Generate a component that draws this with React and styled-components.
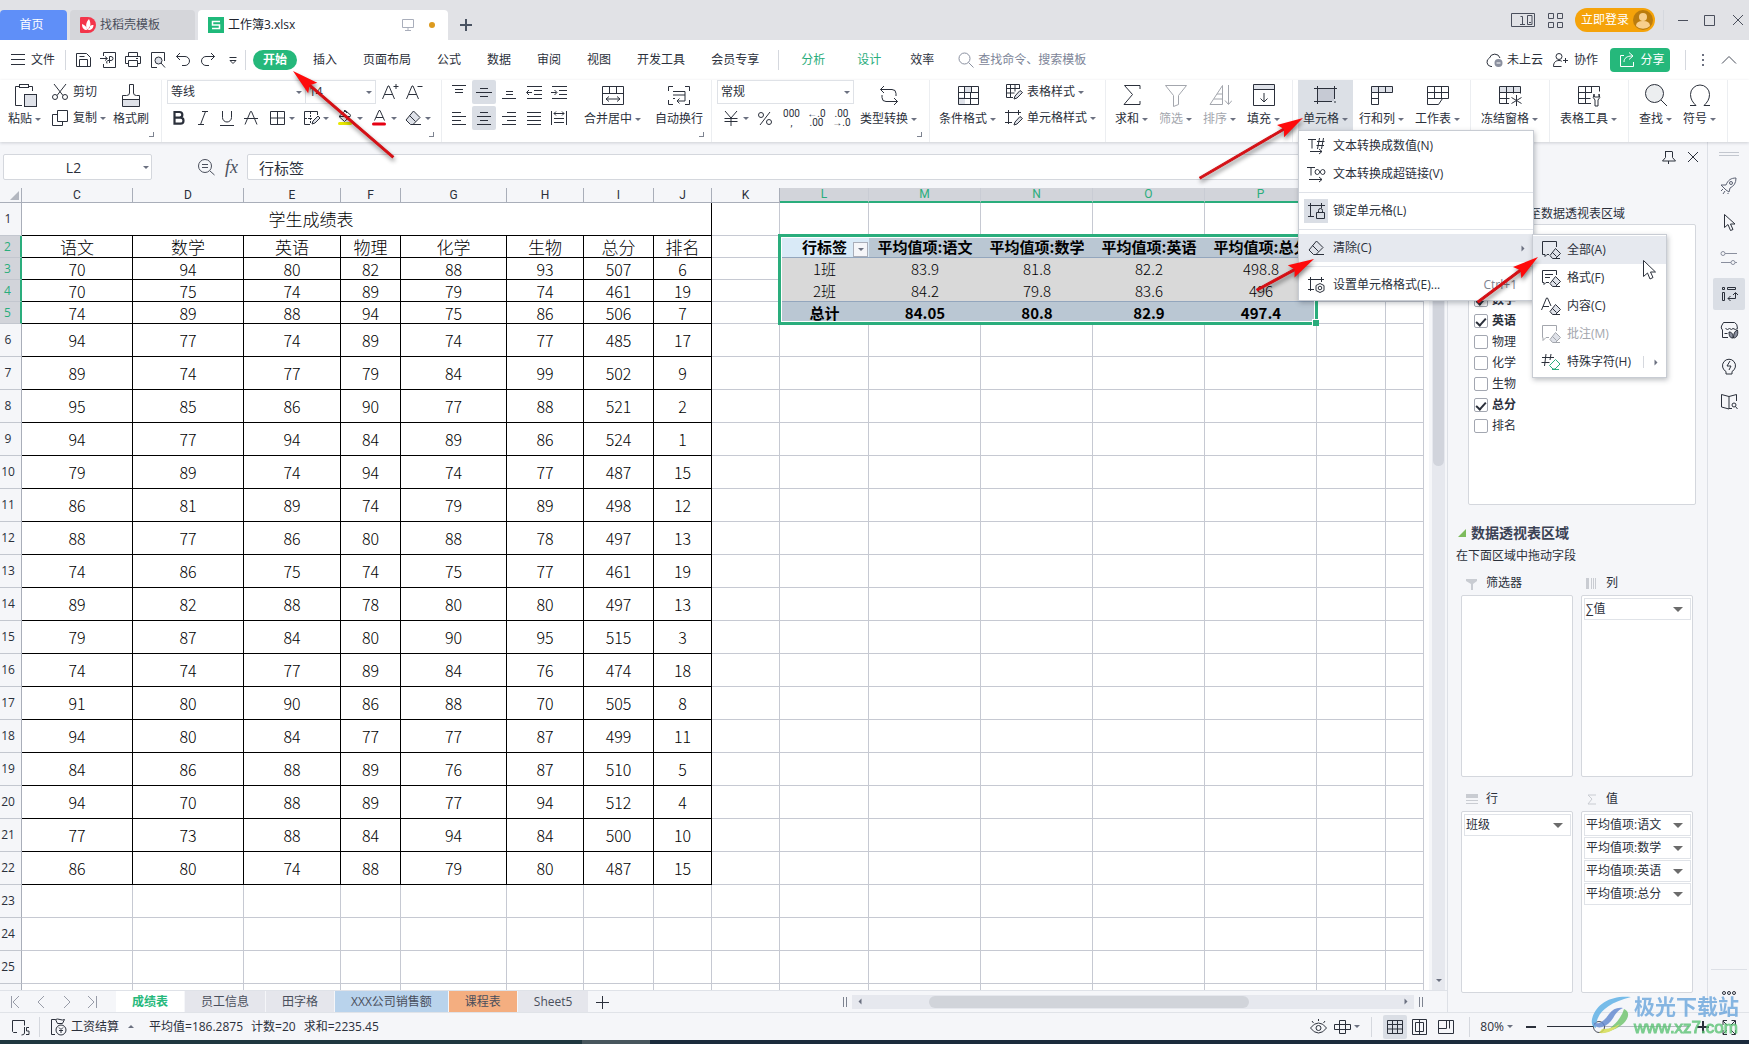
import React from "react";
import styled, { createGlobalStyle, css } from "styled-components";

const GlobalStyle = createGlobalStyle`
  * {
    box-sizing: border-box;
  }
  body {
    margin: 0;
    overflow: hidden;
    font-family: "Open Sans", "Noto Sans CJK SC", sans-serif;
    font-size: 12px;
    line-height: 16px;
    color: #2b303b;
    background: #f5f6f9;
  }
  button, input, select {
    font: inherit;
    color: inherit;
  }
  button {
    padding: 0;
    border: 0;
    background: none;
    white-space: nowrap;
  }
  a {
    color: inherit;
    text-decoration: none;
  }
`;

const GREEN = "#2aad7c";

/* ---------- icons ---------- */

const Svg = styled.svg`
  display: block;
  flex: none;
  fill: none;
  stroke: ${props => props.$color || "#2b303b"};
  stroke-width: 1;
`;

function Icon({ name, w = 24, h = 24, color }) {
  return (
    <Svg width={w} height={h} viewBox={`0 0 ${w} ${h}`} $color={color} aria-hidden="true">
      {shapes[name]}
    </Svg>
  );
}

const eraser = (
  <g>
    <path d="M12.500 5l6.500 6.500-7 7h-2.500l-4.500-4.500z" fill="#dfe2e9" />
    <path d="M8.500 9.500l6 6M12 18.500h8" fill="none" />
  </g>
);
const smallEraser = (
  <path d="M17.500 10.500l5 5-5 5h-3l-2.500-3zM14 14l4.500 4.500M15 20.500h7" fill="#dfe2e9" />
);

const shapes = {
  menu: <path d="M5 6.500h14M5 11.500h14M5 16.500h14" />,
  save: <path d="M5.500 5.500v13h14V9.500l-4-4zM8.500 18v-6.500h8V18M8.500 8.500h5" />,
  exportPdf: <path d="M7.500 8V4.500h12v15h-12V16M4 10.500h7M9 8.500l2.500 2L9 12.500M13.500 15V8.500h1.500a2 2 0 010 4h-3a2 2 0 00-1 3" />,
  print: <path d="M7.500 8.500v-4h9v4M7.500 15.500h-3v-7h15v7h-3M7.500 12.500h9v6h-9zM15 10.500h2" />,
  preview: (
    <g>
      <path d="M11 19.500H5.500v-15h13V13" />
      <circle cx="12.500" cy="12.500" r="3.500" fill="#dfe2e9" />
      <path d="M15 15l4 4.500" />
    </g>
  ),
  undo: <path d="M9 5L5.500 8.500 9 12M5.500 8.500H14a4.500 4.500 0 010 9h-3" />,
  redo: <path d="M15 5l3.500 3.500L15 12M18.500 8.500H10a4.500 4.500 0 000 9h3" />,
  more: <path d="M8.500 9.500h7M9 12.500h6l-3 3z" />,
  paste: (
    <g>
      <path d="M9 22.500H2.500V3.500h4M15.500 3.500h4V8" />
      <rect x="6.500" y="1.500" width="9" height="3" />
      <rect x="11.500" y="11.500" width="12" height="12" fill="#dfe2e9" />
    </g>
  ),
  cut: (
    <g>
      <path d="M6 4l9 11.500M18 4L9 15.500" />
      <circle cx="7" cy="17" r="2.500" />
      <circle cx="17" cy="17" r="2.500" />
    </g>
  ),
  copy: <path d="M9.500 4.500h10v11h-10zM9 8.500H4.500v11h10V16" />,
  brush: (
    <g>
      <path d="M4 17h17v6.500H4z" fill="#dfe2e9" stroke="none" />
      <path d="M10.500 10V1.500h4V10q0 2.500 3 2.500h3v11h-17v-11h4q3 0 3-2.500zM4 16.500h16" />
    </g>
  ),
  fontUp: <path d="M4.500 19L10 6h1l5.500 13M6.500 14.500h8M18 4v5M15.500 6.500h5" />,
  fontDown: <path d="M4.500 19L10 6h1l5.500 13M6.500 14.500h8M15.500 6.500h5" />,
  bold: <path d="M7.500 6h5a2.800 2.800 0 010 5.700h-5zM7.500 11.700h6a3 3 0 010 6h-6z" strokeWidth="2.200" />,
  italic: <path d="M11 5.500h6M7 18.500h6M14.500 5.500l-5 13" />,
  underline: <path d="M7.500 5v6.500a4.500 4.500 0 009 0V5M5 19.500h14" />,
  strike: <path d="M6 18.500L11.500 5.500h1l5.500 13M5 12.500h14" />,
  border: <path d="M5.500 5.500h14v13h-14zM12.500 5.500v13M5.500 12h14" />,
  drawBorder: (
    <g>
      <path d="M11 18.500H5.500v-13h13V9" />
      <path d="M11.500 6v12M6 12.500h7" strokeDasharray="2 1" />
      <path d="M13 18l1-3 5-5 2 2-5 5z" fill="#dfe2e9" />
    </g>
  ),
  bucket: (
    <g>
      <path d="M12.500 4.500l5.500 5-6.500 6-5.500-5zM6 10.500h11M11 4l3 3" />
      <rect x="5" y="16" width="14" height="3" rx="1.500" fill="#e8e800" stroke="none" />
    </g>
  ),
  fontColor: (
    <g>
      <path d="M7.500 14.500l4.500-10h1l4.500 10M9 11.500h7" />
      <rect x="5" y="16.500" width="14" height="3" rx="1.500" fill="#e60012" stroke="none" />
    </g>
  ),
  eraser,
  alignTop: <path d="M5 5.500h14M8 9.500h8M8 12.500h8" />,
  alignMiddle: <path d="M8 8.500h8M4 12.500h16M8 16.500h8" />,
  alignBottom: <path d="M9 11.500h7M9 14.500h7M5 18.500h14" />,
  outdent: <path d="M5 6.500h15M12 10.500h8M12 14.500h8M5 18.500h15M10 12.500H5M7 10l-2.500 2.500L7 15" />,
  indent: <path d="M5 6.500h15M12 10.500h8M12 14.500h8M5 18.500h15M4 12.500h5.500M7.500 10l2.500 2.500L7.500 15" />,
  alignLeft: <path d="M5 6.500h9M5 10.500h14M5 14.500h9M5 18.500h14" />,
  alignCenter: <path d="M8 6.500h8M5 10.500h14M8 14.500h8M5 18.500h14" />,
  alignRight: <path d="M10 6.500h9M5 10.500h14M10 14.500h9M5 18.500h14" />,
  justify: <path d="M5 6.500h14M5 10.500h14M5 14.500h14M5 18.500h14" />,
  distribute: <path d="M4.500 5v14M19.500 5v14M7 7.500h10M9 5.500l-2 2 2 2M15 5.500l2 2-2 2M7 12.500h10M7 16.500h10" />,
  merge: <path d="M1.500 3.500h21v18h-21zM1.500 10.500h21M8.500 3.500v7M15.500 3.500v7M5 16h14M8 13.500L5 16l3 2.500M16 13.500l3 2.500-3 2.500" />,
  wrap: <path d="M1.500 8V3.500H6M18 3.500h4.500V8M1.500 17v4.500H6M22.500 17v4.500H18M6 8.500h12M6 12h12M6 15.500h2M18 8.500V18h-8M12.500 15.500L10 18l2.500 2.500" />,
  yen: <path d="M6 5l6 7 6-7M12 12v8M5.500 12.500h13M5.500 15.500h13" />,
  percent: (
    <g>
      <circle cx="8" cy="9" r="2.500" />
      <circle cx="16" cy="16" r="2.500" />
      <path d="M17 6L7 19" />
    </g>
  ),
  convert: <path d="M7 3L3.500 6.500 7 10M3.500 6.500H15q4 0 4 4V13M17 15l3.500 3.500L17 22M20.500 18.500H9q-4 0-4-4V12" />,
  condFormat: (
    <g>
      <path d="M8 4h7v5H8zM3 14h6v7H3z" fill="#dfe2e9" stroke="none" />
      <path d="M2.500 3.500h20v18h-20zM2.500 9.500h20M2.500 15.500h20M8.500 3.500v12M14.500 9.500v12M15.500 3.500v6" />
    </g>
  ),
  tableStyle: (
    <g>
      <path d="M11 17.500H4.500v-13h13V9M4.500 8.500h13M4.500 13h8M8.500 4.500v13M13 4.500v7" />
      <path d="M12 19l1-3 5-5.500 2.500 2-5.500 5.500z" fill="#dfe2e9" />
    </g>
  ),
  cellStyle: (
    <g>
      <path d="M3 6.500h16M6.500 4v14M16.500 4v5M3 16.500h7" />
      <path d="M12 19l1-3 5-5.500 2.500 2-5.500 5.500z" fill="#dfe2e9" />
    </g>
  ),
  sum: <path d="M20 6V2.500H4.500l8 9-8.500 10h16V18" />,
  filter: <path d="M1.500 2.500h21l-8 10v9l-5 2v-11z" />,
  sort: <path d="M2 21.500h12.500v-19zM6 16h8M9 11h5M20.500 2v19M17 17.500l3.500 4 3.500-4" />,
  fill: (
    <g>
      <path d="M2 2h20v5H2z" fill="#dfe2e9" stroke="none" />
      <path d="M1.500 1.500h21v21h-21zM1.500 6.500h21M12 10v9M8.500 15.500L12 19l3.500-3.500" />
    </g>
  ),
  cell: (
    <g>
      <path d="M4 6h16v12H4z" fill="#c6cad4" stroke="none" />
      <path d="M0 5.500h23M0 18.500h18M3.500 3v18M20.500 3v13M21 18v2" />
    </g>
  ),
  rowCol: (
    <g>
      <path d="M2 4h20v6H2z" fill="#dfe2e9" stroke="none" />
      <path d="M1.500 3.500h21v6h-21zM1.500 9.500v12h7v-18M15.500 3.500v6M1.500 15.500h7" />
    </g>
  ),
  sheet: <path d="M1.500 3.500h21v12h-21zM1.500 9.500h21M8.500 3.500v12M15.500 3.500v12M1.500 15.500v6h11l4-6" />,
  freeze: (
    <g>
      <path d="M2 4h20v5H2z" fill="#dfe2e9" stroke="none" />
      <path d="M11 20.500H1.500v-17h21v7M1.500 9.500h21M1.500 15.500h10M8.500 3.500v17M15.500 3.500v7M18.500 12v11M13.500 14.500l10 6M23.500 14.500l-10 6" />
    </g>
  ),
  tool: (
    <g>
      <path d="M14 20.500H1.500v-17h21v5M1.500 9.500H15M1.500 15.500h12M8.500 3.500v17M14.500 3.500v6" />
      <path d="M17 11q-2 4 1 6v6h3v-6q3-2 1-6v3h-4.500z" />
    </g>
  ),
  find: (
    <g>
      <circle cx="10.500" cy="10.500" r="9" fill="#eceef0" />
      <path d="M17 17l6 6" />
    </g>
  ),
  omega: <path d="M2 22.500h6c-3-3-5.500-6-5.500-11a9.500 9.500 0 0119 0c0 5-2.500 8-5.500 11h6" />,
  cloud: (
    <g>
      <path d="M10 18.500H9a4.500 4.500 0 01-1.500-8.500 5.500 5.500 0 0110.500 0" />
      <circle cx="16.500" cy="15" r="4" fill="#8a8f9e" stroke="none" />
      <path d="M14.500 15h4" stroke="#fff" />
    </g>
  ),
  person: (
    <g>
      <circle cx="10" cy="8.500" r="3" />
      <path d="M12.500 18.500h-8c0-4 2-6 5.500-6 1.500 0 2.500.5 3 1M14 12.500h5M16.500 10v5" />
    </g>
  ),
  share: <path d="M9 7.500H5.500v11h13V14M9 14c0-4 3-6 8-6M14 4.500l4 3.500-4 3.500" />,
  magnifier: (
    <g>
      <circle cx="10.500" cy="10.500" r="5.500" />
      <path d="M14.500 14.500l5 5" />
    </g>
  ),
  cancel: (
    <g>
      <circle cx="11" cy="11" r="6.500" />
      <path d="M8 9.500h6M8 12.500h6M16 16l4.500 4" />
    </g>
  ),
  dots: <path d="M12 6v2M12 11v2M12 16v2" strokeWidth="2" />,
  up: <path d="M5 15.500l7-7 7 7" />,
  plus: <path d="M12 6v12M6 12h12" strokeWidth="2" />,
  thinPlus: <path d="M12.500 6v13M6 12.500h13" />,
  panel: <path d="M0.500 5.500h23v13h-23zM16.500 7.500h4.500v9h-4.500zM18 14.500h2M9.500 8.500h2V16M9 16.500h5" />,
  apps: <path d="M5.500 5.500h5v5h-5zM14.500 5.500h5v5h-5zM5.500 14.500h5v5h-5zM14.500 14.500h5v5h-5z" />,
  minimize: <path d="M7 12.500h10" />,
  maximize: <path d="M7.500 7.500h10v10h-10z" />,
  close: <path d="M7 7l10 10M17 7L7 17" />,
  monitor: <path d="M6.500 6.500h11v8h-11zM12 14.500v3M9 17.500h6" />,
  pin: <path d="M9 6.500h7M9.500 6.500v6l-3 3.500h13l-3-3.500v-6M12.500 16v3" />,
  toNumber: <path d="M4 5.500h8M8 5.500v9M15.500 4l-2 11M19.500 4l-2 11M13 7.500h7.500M12.500 11.500h7.500M6 17.500h12M15 15l3 2.500-3 2.500" />,
  toLink: (
    <g>
      <path d="M3 5.500h8M7 5.500v8M5 17.500h13M15 15l3 2.500-3 2.500" />
      <path d="M13.500 12.500a2.500 2.500 0 110-5c2 0 3 5 5 5a2.500 2.500 0 000-5c-2 0-3 5-5 5z" />
    </g>
  ),
  lock: <path d="M4 6.500h17M6.500 4v14M17.500 4v5M4 17.500h6M12.500 13.500h8v6h-8zM14.500 13v-1.500a2 2 0 014 0V13" />,
  settings: (
    <g>
      <path d="M4 6.500h16M6.500 4v14M17.500 4v5M4 16.500h6" />
      <path d="M16 10.500l4 2v5l-4 2-4-2v-5z" />
      <circle cx="16" cy="15" r="1.800" />
    </g>
  ),
  clearAll: (
    <g>
      <path d="M11 16.500H9l-2 2v-2H4.500v-13h14V9" />
      {smallEraser}
    </g>
  ),
  clearFormat: (
    <g>
      <path d="M11 16.500H8l-2 2v-2H4.500v-12h14V9M7 8.500h8M7 11.500h5" />
      {smallEraser}
    </g>
  ),
  clearContent: (
    <g>
      <path d="M3.500 16L8.500 4h1L13 12M5 12.500h6" />
      {smallEraser}
    </g>
  ),
  clearNote: (
    <g>
      <path d="M11 15.500H8l-3 3v-3h-.5v-12h14V9" />
      {smallEraser}
    </g>
  ),
  clearSpecial: (
    <g>
      <path d="M8 4L6.500 16M13 4l-1 6M4 7.500h12M3.500 12.500h8" />
      <path d="M17.500 9.500l4.500 4.500-5 5h-2l-3.500-3.500zM14 19.500h7" stroke={GREEN} />
    </g>
  ),
  rocket: (
    <g>
      <path d="M9 11c2-5 5-7 10-7 0 5-2 8-6 10l-1 4-3-2-3-3-2-2zM6 15l-2 2M8 17l-2 3M11 19v1" />
      <circle cx="14" cy="9" r="1.500" />
    </g>
  ),
  pointer: <path d="M7.500 4.500v13l3.500-3 2.500 6 2.500-1-2.500-5.500h4.500z" />,
  sliders: (
    <g>
      <circle cx="6" cy="7.500" r="2" />
      <path d="M8 7.500h12M4 16.500h10M18 16.500h2" />
      <circle cx="16" cy="16.500" r="2" />
    </g>
  ),
  pivot: <path d="M5.500 5.500h2v2h-2zM5.500 10.500h2v8h-2zM10.500 5.500h8v2h-8zM11 16.500h7.500V11M13.500 14L11 16.500l2.500 2.500M16 13l2.500-2.500L21 13" />,
  resource: (
    <g>
      <path d="M11 19.500H5.500V12q-2-2-1-4l2-3.500h11q3 1 3 6-2 2-4.500 0-1.500 2-3.500 0-2 2-4 0M7.500 15.500h3" />
      <path d="M12 14c3 0 4 2 4 6-3 0-4-2-4-6zM20.500 12c-3 1-4 4-4 8 3 0 5-3 4-8z" fill="#8a8f9e" />
    </g>
  ),
  idea: <path d="M9 17.500a6.500 6.500 0 116 0v2.500H9zM13 7l-3 5h4l-2 4" />,
  book: (
    <g>
      <path d="M12 19V6.500L4.500 4.500v12.500l7.500 2M12 6.500l7.500-2V11M12 18.500h3" />
      <circle cx="17" cy="15" r="2" />
      <path d="M18.500 16.500l2 2.500" />
    </g>
  ),
  script: <path d="M9 17.500H5.500l-1-1V5.500h12v5M16.500 12v6q0 2-3 2M21 12.500h-2.500v3.500h2.500v3.500H18" />,
  salary: (
    <g>
      <path d="M8 19.500H4.500v-15h4M8.500 4.500l2 4h5l2-4q-2 1-4.500 0t-4.500 0z" />
      <circle cx="14" cy="15" r="5" />
      <path d="M12 12.500l2 2 2-2M12 15.500h4M14 15v3" />
    </g>
  ),
  eye: (
    <g>
      <path d="M4.500 13q3.500-5 8-5t8 5q-3.500 5-8 5t-8-5zM6 6l1.500 2M12.500 4v2M19 6l-1.500 2" />
      <circle cx="12.500" cy="13" r="2.500" />
    </g>
  ),
  cross: <path d="M9.500 5.500h6v13h-6zM4.500 9.500h16v5h-16z" />,
  gridView: <path d="M4.500 5.500h15v13h-15zM4.500 9.500h15M4.500 14h15M9.500 5.500v13M14.500 5.500v13" />,
  pageView: <path d="M4.500 4.500h14v15h-14zM7.500 7.500h8v9h-8zM11.500 4.500v15" />,
  breakView: <path d="M4.500 5.500h15v13h-15zM4.500 13.500h8V5.500M15.500 5.500v8" />,
  expand: <path d="M6 10V5.500h4M18.500 10V5.500h-4M6 15v4.500h4M18.500 15v4.500h-4M6 6l4 4M18 6l-4 4M6 19l4-4M18 19l-4-4" />
};

const Caret = styled.i`
  flex: none;
  width: 0;
  height: 0;
  border: 3px solid transparent;
  border-top-color: #6b7080;
  border-bottom: 0;
  transform: ${props => (props.$up ? "rotate(180deg)" : "none")};
`;

const Divider = styled.span`
  flex: none;
  width: 1px;
  height: 20px;
  margin-right: ${props => props.$after || 0}px;
  background: #d5d8de;
`;

const IconButton = styled.button`
  display: flex;
  align-items: center;
  justify-content: center;
  flex: none;
  width: ${props => props.$w || 25}px;
  height: 24px;
  border-radius: 2px;
  background: ${props => (props.$active ? "#dadee5" : "none")};
`;

/* ---------- title bar ---------- */

const TitleBar = styled.header`
  display: flex;
  align-items: flex-end;
  flex: none;
  height: 40px;
  background: #e1e2e6;
`;

const FileTab = styled.button`
  display: flex;
  align-items: center;
  gap: 4px;
  width: ${props => props.$w}px;
  height: 30px;
  margin-right: 3px;
  padding: 0 10px;
  border-radius: 4px 4px 0 0;
  background: ${props => props.$bg};
  color: ${props => props.$color || "#4a4f5c"};
  ${props => props.$center && css`
    justify-content: center;
    padding: 0 10px 0 6px;
  `}
`;

const Dot = styled.span`
  width: 6px;
  height: 6px;
  margin: 0 3px 0 5px;
  border-radius: 50%;
  background: #dc9a1e;
`;

const Spacer = styled.span`
  flex: 1;
`;

const WindowTools = styled.div`
  display: flex;
  align-items: center;
  height: 40px;
`;

const Login = styled.button`
  display: flex;
  align-items: center;
  justify-content: space-between;
  width: 80px;
  height: 24px;
  margin: 0 8px;
  padding: 0 2px 0 6px;
  border-radius: 12px;
  background: #f5a30a;
  color: #fff;
`;

function FileTabs() {
  return (
    <TitleBar>
      <FileTab $w={67} $bg="#5f8ff8" $color="#fff" $center>首页</FileTab>
      <FileTab $w={125} $bg="#d5d6da">
        <svg width="16" height="16" viewBox="0 0 16 16" aria-hidden="true">
          <path d="M1 0h7a8 8 0 010 16H1a1 1 0 01-1-1V1a1 1 0 011-1z" fill="#f3354a" />
          <path d="M8 13C5 10 6 5 9 2c2 4 2 8-1 11zM7 13c-3 0-5-2-5-6 3 1 5 3 5 6zM8.500 13c3 0 5-2 5-5-3 0-5 2-5 5z" fill="#fff" />
        </svg>
        找稻壳模板
      </FileTab>
      <FileTab $w={250} $bg="#fff" $color="#20242e">
        <svg width="16" height="16" viewBox="0 0 16 16" fill="none" aria-hidden="true">
          <path d="M0 0h16v16H0z" fill="#1fb97a" />
          <path d="M12 4.500H4.500v3.500h7v3.500H4" stroke="#fff" strokeWidth="1.500" />
        </svg>
        工作簿3.xlsx
        <Spacer />
        <Icon name="monitor" color="#a9aebb" />
        <Dot />
      </FileTab>
      <PlusHolder>
        <IconButton $w={30} aria-label="新建">
          <Icon name="plus" color="#4a5362" />
        </IconButton>
      </PlusHolder>
      <Spacer />
      <WindowTools>
        <IconButton $w={40} aria-label="面板"><Icon name="panel" color="#4a4f5c" /></IconButton>
        <IconButton $w={24} aria-label="应用"><Icon name="apps" color="#4a4f5c" /></IconButton>
        <Login>
          立即登录
          <svg width="20" height="20" viewBox="0 0 20 20" aria-hidden="true">
            <circle cx="10" cy="10" r="10" fill="#bb7c0e" />
            <circle cx="10" cy="7" r="4" fill="#f8cf8d" />
            <path d="M3 16q0-5 7-5t7 5a10 10 0 01-14 0z" fill="#f8cf8d" />
          </svg>
        </Login>
        <Divider $after={7} />
        <IconButton $w={20} aria-label="最小化"><Icon name="minimize" w={20} color="#4a4f5c" /></IconButton>
        <IconButton $w={36} aria-label="最大化"><Icon name="maximize" color="#4a4f5c" /></IconButton>
        <IconButton $w={22} aria-label="关闭"><Icon name="close" color="#4a4f5c" /></IconButton>
      </WindowTools>
    </TitleBar>
  );
}

const PlusHolder = styled.div`
  padding-bottom: 3px;
`;

/* ---------- menu bar ---------- */

const MenuBar = styled.nav`
  display: flex;
  align-items: center;
  flex: none;
  height: 40px;
  padding: 0 8px 0 6px;
  background: #fff;
`;

const FileButton = styled.button`
  display: flex;
  align-items: center;
  gap: 1px;
  width: 59px;
`;

const QuickTools = styled.div`
  display: flex;
  margin-left: 4px;
`;

const MenuTab = styled.button`
  padding: 0 ${props => (props.$wide ? 16 : 13)}px;
  color: ${props => (props.$wide ? GREEN : "inherit")};
  ${props => props.$active && css`
    height: 20px;
    margin: 0 3px 0 7px;
    padding: 0 10px;
    border-radius: 10px;
    background: #25b87b;
    color: #fff;
    font-weight: 700;
  `}
`;

const TabBreak = styled(Divider)`
  margin: 0 6px;
`;

const Search = styled.label`
  display: flex;
  align-items: center;
  flex: 1;
  margin-left: 7px;
`;

const SearchInput = styled.input`
  flex: 1;
  min-width: 0;
  padding: 0;
  border: 0;
  background: none;
  &::placeholder {
    color: #7d8598;
    opacity: 1;
  }
`;

const TextButton = styled.button`
  display: flex;
  align-items: center;
  gap: 1px;
  margin-right: 6px;
`;

const ShareButton = styled.button`
  display: flex;
  align-items: center;
  justify-content: center;
  gap: 1px;
  width: 60px;
  height: 24px;
  margin: 0 15px 0 6px;
  border-radius: 4px;
  background: #25b87b;
  color: #fff;
`;

const quickTools = ["save", "exportPdf", "print", "preview", "undo", "redo", "more"];
const menuTabs = ["插入", "页面布局", "公式", "数据", "审阅", "视图", "开发工具", "会员专享"];

function Menu() {
  return (
    <MenuBar>
      <FileButton><Icon name="menu" />文件</FileButton>
      <Divider />
      <QuickTools>
        {quickTools.map(name => (
          <IconButton key={name} aria-label={name}><Icon name={name} /></IconButton>
        ))}
      </QuickTools>
      <Divider />
      <MenuTab $active>开始</MenuTab>
      {menuTabs.map(tab => (
        <MenuTab key={tab}>{tab}</MenuTab>
      ))}
      <TabBreak />
      <MenuTab $wide>分析</MenuTab>
      <MenuTab $wide>设计</MenuTab>
      <MenuTab>效率</MenuTab>
      <Search>
        <Icon name="magnifier" color="#8a90a0" />
        <SearchInput placeholder="查找命令、搜索模板" aria-label="查找命令、搜索模板" />
      </Search>
      <TextButton><Icon name="cloud" />未上云</TextButton>
      <TextButton><Icon name="person" />协作</TextButton>
      <ShareButton><Icon name="share" color="#fff" />分享</ShareButton>
      <Divider $after={4} />
      <IconButton $w={26} aria-label="更多"><Icon name="dots" color="#6b7080" /></IconButton>
      <IconButton aria-label="收起"><Icon name="up" color="#4a4f5c" /></IconButton>
    </MenuBar>
  );
}

/* ---------- ribbon ---------- */

const RibbonBar = styled.div`
  position: relative;
  z-index: 2;
  display: flex;
  flex: none;
  height: 62px;
  background: #fff;
  box-shadow: 0 1px 3px rgba(40, 50, 70, 0.2);
`;

const Group = styled.div`
  position: relative;
  display: flex;
  flex: none;
  gap: ${props => props.$gap || 1}px;
  width: ${props => props.$w}px;
  padding-left: ${props => props.$pad || 5}px;
  border-right: 1px solid #eceef1;
`;

const Launcher = styled.span`
  position: absolute;
  right: 7px;
  bottom: 5px;
  width: 5px;
  height: 5px;
  border: solid #7d8390;
  border-width: 0 1px 1px 0;
`;

const BigButton = styled.button`
  display: flex;
  flex-direction: column;
  align-items: center;
  gap: 4px;
  flex: none;
  height: 50px;
  padding: 3px 5px 0;
  background: ${props => (props.$active ? "#dce0e6" : "none")};
  &:disabled {
    color: #a3a6ad;
  }
`;

const Label = styled.span`
  display: flex;
  align-items: center;
  gap: 3px;
`;

const Lines = styled.div`
  display: flex;
  flex-direction: column;
  gap: 2px;
  height: 50px;
`;

const Line = styled.div`
  display: flex;
  align-items: center;
  height: 24px;
  gap: ${props => props.$gap || 0}px;
`;

const SmallButton = styled.button`
  display: flex;
  align-items: center;
  gap: 1px;
  height: 24px;
`;

const SelectBox = styled.span`
  display: flex;
  align-items: center;
  width: ${props => props.$w}px;
  height: 24px;
  padding-right: 3px;
  border: 1px solid #dfe2e7;
  background: #fff;
  & + & {
    border-left: 0;
  }
`;

const Select = styled.select`
  flex: 1;
  min-width: 0;
  padding: 0 3px;
  border: 0;
  appearance: none;
  background: none;
`;

const Decimals = styled.span`
  width: 25px;
  font-family: Roboto, "Noto Sans", sans-serif;
  font-size: 10px;
  line-height: 9px;
  text-align: center;
  white-space: pre-line;
`;

function Big({ icon, label, caret = true, active, disabled }) {
  return (
    <BigButton $active={active} disabled={disabled}>
      <Icon name={icon} color={disabled ? "#a3a6ad" : undefined} />
      <Label>{label}{caret && <Caret />}</Label>
    </BigButton>
  );
}

function Combo({ label, value, w }) {
  return (
    <SelectBox $w={w}>
      <Select aria-label={label} defaultValue={value}>
        <option>{value}</option>
      </Select>
      <Caret />
    </SelectBox>
  );
}

function Small({ icon, label, caret = true }) {
  return (
    <SmallButton>
      <Icon name={icon} />
      <Label>{label}{caret && <Caret />}</Label>
    </SmallButton>
  );
}

const plainFont = ["bold", "italic", "underline", "strike"];
const caretFont = ["border", "drawBorder", "bucket", "fontColor", "eraser"];
const alignTop = ["alignTop", "alignMiddle", "alignBottom", "outdent", "indent"];
const alignBottom = ["alignLeft", "alignCenter", "alignRight", "justify", "distribute"];

const Anchor = styled.div`
  position: relative;
`;

function AlignLine({ names, active }) {
  return (
    <Line $gap={1}>
      {names.map(name => (
        <IconButton key={name} $w={24} $active={name === active} aria-label={name}>
          <Icon name={name} />
        </IconButton>
      ))}
    </Line>
  );
}

function Ribbon() {
  return (
    <RibbonBar>
      <Group $w={162} $pad={3} $gap={2}>
        <Big icon="paste" label="粘贴" />
        <Lines>
          <Small icon="cut" label="剪切" caret={false} />
          <Small icon="copy" label="复制" />
        </Lines>
        <Big icon="brush" label="格式刷" caret={false} />
        <Launcher />
      </Group>
      <Group $w={280}>
        <Lines>
          <Line>
            <Combo label="字体" value="等线" w={139} />
            <Combo label="字号" value="14" w={70} />
            <IconButton $w={28} aria-label="增大字号"><Icon name="fontUp" /></IconButton>
            <IconButton $w={20} aria-label="减小字号"><Icon name="fontDown" /></IconButton>
          </Line>
          <Line>
            {plainFont.map(name => (
              <IconButton key={name} $w={24} aria-label={name}><Icon name={name} /></IconButton>
            ))}
            {caretFont.map(name => (
              <IconButton key={name} $w={34} aria-label={name}><Icon name={name} /><Caret /></IconButton>
            ))}
          </Line>
        </Lines>
        <Launcher />
      </Group>
      <Group $w={270} $gap={4}>
        <Lines>
          <AlignLine names={alignTop} active="alignMiddle" />
          <AlignLine names={alignBottom} active="alignCenter" />
        </Lines>
        <Wide><Big icon="merge" label="合并居中" /></Wide>
        <Big icon="wrap" label="自动换行" caret={false} />
        <Launcher />
      </Group>
      <Group $w={218}>
        <Lines>
          <Line><Combo label="数字格式" value="常规" w={137} /></Line>
          <Line>
            <IconButton $w={34} aria-label="货币"><Icon name="yen" /><Caret /></IconButton>
            <IconButton $w={28} aria-label="百分比"><Icon name="percent" /></IconButton>
            <Decimals>{"000\n,"}</Decimals>
            <Decimals>{"←.0\n.00"}</Decimals>
            <Decimals>{".00\n→.0"}</Decimals>
          </Line>
        </Lines>
        <Big icon="convert" label="类型转换" />
        <Launcher />
      </Group>
      <Group $w={176} $pad={4}>
        <Big icon="condFormat" label="条件格式" />
        <Lines>
          <Small icon="tableStyle" label="表格样式" />
          <Small icon="cellStyle" label="单元格样式" />
        </Lines>
      </Group>
      <Group $w={187} $pad={4}>
        <Big icon="sum" label="求和" />
        <Big icon="filter" label="筛选" disabled />
        <Big icon="sort" label="排序" disabled />
        <Big icon="fill" label="填充" />
      </Group>
      <Group $w={178}>
        <Anchor>
          <Big icon="cell" label="单元格" active />
          <CellMenu />
        </Anchor>
        <Big icon="rowCol" label="行和列" />
        <Big icon="sheet" label="工作表" />
      </Group>
      <Group $w={79}>
        <Big icon="freeze" label="冻结窗格" />
      </Group>
      <Group $w={79}>
        <Big icon="tool" label="表格工具" />
      </Group>
      <Group $w={99}>
        <Big icon="find" label="查找" />
        <Big icon="omega" label="符号" />
      </Group>
    </RibbonBar>
  );
}

const Wide = styled.div`
  padding-left: 4px;
`;

/* ---------- drop-down menus ---------- */

const Popup = styled.ul`
  position: absolute;
  top: ${props => props.$top};
  left: ${props => props.$left};
  z-index: 5;
  width: ${props => props.$w}px;
  margin: 0;
  padding: 1px 0;
  border: 1px solid #c8ccd3;
  background: #fff;
  box-shadow: 1px 2px 5px rgba(40, 45, 60, 0.3);
  list-style: none;
`;

const PopupItem = styled.li`
  position: relative;
  height: 28px;
  background: ${props => (props.$active ? "#e6e9ef" : "none")};
`;

const PopupButton = styled.button`
  display: flex;
  align-items: center;
  width: 100%;
  height: 28px;
  padding: 0 7px 0 5px;
  &:disabled {
    color: #a3a6ad;
  }
`;

const PopupIcon = styled.span`
  margin-right: 5px;
  background: ${props => (props.$boxed ? "#dadee5" : "none")};
`;

const PopupLine = styled.li`
  height: 1px;
  margin: 4px 0;
  background: #dfe2e8;
`;

const Shortcut = styled.span`
  margin: 0 9px 0 auto;
  color: #7d828e;
`;

const Side = styled(Caret)`
  margin-left: auto;
  transform: rotate(-90deg);
`;

const SideFlat = styled(Side)`
  margin-left: 0;
`;

const SideLine = styled(Divider)`
  height: 12px;
  margin: 0 9px 0 auto;
`;

function Entry({ icon, label, active, disabled, boxed, children, sub }) {
  return (
    <PopupItem $active={active}>
      <PopupButton disabled={disabled}>
        <PopupIcon $boxed={boxed}>
          <Icon name={icon} color={disabled ? "#a3a6ad" : undefined} />
        </PopupIcon>
        {label}
        {children}
      </PopupButton>
      {sub}
    </PopupItem>
  );
}

function ClearMenu() {
  return (
    <Popup $top="0" $left="233px" $w={135}>
      <Entry icon="clearAll" label="全部(A)" active />
      <Entry icon="clearFormat" label="格式(F)" />
      <Entry icon="clearContent" label="内容(C)" />
      <Entry icon="clearNote" label="批注(M)" disabled />
      <Entry icon="clearSpecial" label="特殊字符(H)"><SideLine /><SideFlat /></Entry>
    </Popup>
  );
}

function CellMenu() {
  return (
    <Popup $top="50px" $left="0" $w={236}>
      <Entry icon="toNumber" label="文本转换成数值(N)" />
      <Entry icon="toLink" label="文本转换成超链接(V)" />
      <PopupLine />
      <Entry icon="lock" label="锁定单元格(L)" boxed />
      <PopupLine />
      <Entry icon="eraser" label="清除(C)" active sub={<ClearMenu />}><Side /></Entry>
      <PopupLine />
      <Entry icon="settings" label="设置单元格格式(E)..."><Shortcut>Ctrl+1</Shortcut></Entry>
    </Popup>
  );
}

/* ---------- sheet ---------- */

const Main = styled.main`
  display: flex;
  flex: 1;
  min-height: 0;
`;

const Work = styled.section`
  display: flex;
  flex-direction: column;
  flex: 1;
  min-width: 0;
`;

const FormulaBar = styled.div`
  display: flex;
  align-items: center;
  flex: none;
  height: 46px;
  padding: 4px 18px 0 3px;
`;

const NameBox = styled.label`
  display: flex;
  align-items: center;
  width: 149px;
  height: 26px;
  margin-right: 42px;
  padding-right: 2px;
  border: 1px solid #d4d7dd;
  border-radius: 2px;
  background: #fff;
`;

const FormulaInput = styled.input`
  flex: 1;
  min-width: 0;
  height: 26px;
  padding: 0 11px;
  border: 1px solid #d4d7dd;
  border-radius: 2px;
  background: #fff;
  font-size: 15px;
  ${NameBox} & {
    height: 22px;
    border: 0;
    font-size: 14px;
    text-align: center;
  }
`;

const Fx = styled.i`
  margin: 0 9px 0 7px;
  font-family: "Liberation Serif", serif;
  font-size: 18px;
  color: #4a4f5c;
`;

const SheetArea = styled.div`
  display: flex;
  flex: 1;
  min-height: 0;
`;

const Grid = styled.div`
  position: relative;
  flex: 1;
  min-width: 0;
  overflow: hidden;
  background: #fff;
`;

const Table = styled.table`
  width: 1424px;
  table-layout: fixed;
  border-collapse: separate;
  border-spacing: 0;
  font-family: "Noto Sans CJK SC", sans-serif;
`;

const ColHead = styled.th`
  height: 15px;
  padding: 0;
  border: solid #a9aeb9;
  border-width: 0 1px 1px 0;
  background: #f5f6f9;
  font-family: Roboto, sans-serif;
  font-weight: 400;
  line-height: 14px;
  color: #2b303b;
  ${props => props.$on && css`
    border-color: #c9ccd4;
    border-bottom: 2px solid ${GREEN};
    background: #d2d4da;
    color: ${GREEN};
    line-height: 13px;
  `}
`;

const RowHead = styled.th`
  padding: 0 5px 0 0;
  border: solid #c3c7cf;
  border-width: 0 1px 1px 0;
  border-right-color: #a9aeb9;
  background: #f5f6f9;
  font-family: "Open Sans", sans-serif;
  font-weight: 400;
  white-space: nowrap;
  ${props => props.$on && css`
    border-right: 2px solid ${GREEN};
    background: #d2d4da;
    color: ${GREEN};
  `}
`;

const Corner = styled.svg`
  display: block;
  margin-left: 10px;
`;

const Cell = styled.td`
  height: ${props => props.$h}px;
  padding: 0;
  border: solid #c6c9d2;
  border-width: 0 1px 1px 0;
  font-size: 16px;
  font-weight: 300;
  line-height: 20px;
  text-align: center;
  white-space: nowrap;
  color: #000;
  ${props => props.$boxed && css`
    border-color: #000;
  `}
  ${props => props.$title && css`
    font-size: 17px;
  `}
`;

// the merged title starts at the hidden columns A and B
const TitleCell = styled(Cell)`
  padding-right: 111px;
`;

const PivotCell = styled(Cell)`
  position: relative;
  border-width: 0 0 1px;
  border-color: ${props => (props.$strong || props.$last ? "#93a6bd" : "#d9d9d9")};
  background: ${props => (props.$strong ? "#bac7d3" : "#d9d9d9")};
  font-size: 15px;
  font-weight: ${props => (props.$strong ? 700 : 300)};
  ${props => props.$current && css`
    background: #d9eaf7;
  `}
`;

const FilterButton = styled.button`
  position: absolute;
  right: 1px;
  bottom: 0;
  display: flex;
  align-items: center;
  justify-content: center;
  width: 15px;
  height: 15px;
  border: 1px solid #a9aeb9;
  background: #f5f6f9;
`;

// green frame over L2:P5
const Selection = styled.div`
  position: absolute;
  top: 46px;
  left: 778px;
  width: 540px;
  height: 91px;
  border: 3px solid ${GREEN};
  box-shadow: inset 0 0 0 1px #fff;
  &::after {
    content: "";
    position: absolute;
    right: -4px;
    bottom: -4px;
    width: 6px;
    height: 6px;
    border: solid #fff;
    border-width: 1px 0 0 1px;
    background: ${GREEN};
  }
`;

const columns = [
  ["C", 111], ["D", 111], ["E", 97], ["F", 60], ["G", 106], ["H", 77], ["I", 70], ["J", 58],
  ["K", 68], ["L", 89], ["M", 112], ["N", 112], ["O", 112], ["P", 112], ["Q", 69], ["R", 38]
];

const scores = [
  ["语文", "数学", "英语", "物理", "化学", "生物", "总分", "排名"],
  [70, 94, 80, 82, 88, 93, 507, 6],
  [70, 75, 74, 89, 79, 74, 461, 19],
  [74, 89, 88, 94, 75, 86, 506, 7],
  [94, 77, 74, 89, 74, 77, 485, 17],
  [89, 74, 77, 79, 84, 99, 502, 9],
  [95, 85, 86, 90, 77, 88, 521, 2],
  [94, 77, 94, 84, 89, 86, 524, 1],
  [79, 89, 74, 94, 74, 77, 487, 15],
  [86, 81, 89, 74, 79, 89, 498, 12],
  [88, 77, 86, 80, 88, 78, 497, 13],
  [74, 86, 75, 74, 75, 77, 461, 19],
  [89, 82, 88, 78, 80, 80, 497, 13],
  [79, 87, 84, 80, 90, 95, 515, 3],
  [74, 74, 77, 89, 84, 76, 474, 18],
  [91, 80, 90, 86, 88, 70, 505, 8],
  [94, 80, 84, 77, 77, 87, 499, 11],
  [84, 86, 88, 89, 76, 87, 510, 5],
  [94, 70, 88, 89, 77, 94, 512, 4],
  [77, 73, 88, 84, 94, 84, 500, 10],
  [86, 80, 74, 88, 79, 80, 487, 15]
];

const pivot = {
  2: ["行标签", "平均值项:语文", "平均值项:数学", "平均值项:英语", "平均值项:总分"],
  3: ["1班", "83.9", "81.8", "82.2", "498.8"],
  4: ["2班", "84.2", "79.8", "83.6", "496"],
  5: ["总计", "84.05", "80.8", "82.9", "497.4"]
};

function Row({ n }) {
  const h = n > 1 && n < 6 ? 22 : 33;
  const data = scores[n - 2];
  return (
    <tr>
      <RowHead $on={!!pivot[n]}>{n}</RowHead>
      {n === 1 && <TitleCell colSpan={8} $h={h} $boxed $title>学生成绩表</TitleCell>}
      {columns.slice(n === 1 ? 8 : 0).map(([name], i) => {
        const col = n === 1 ? i + 8 : i;
        if (pivot[n] && col > 8 && col < 14) {
          return (
            <PivotCell key={name} $h={h} $strong={n === 2 || n === 5} $last={n === 4} $current={n === 2 && col === 9}>
              {pivot[n][col - 9]}
              {n === 2 && col === 9 && <FilterButton aria-label="筛选行标签"><Caret /></FilterButton>}
            </PivotCell>
          );
        }
        const boxed = data && col < 8;
        return (
          <Cell key={name} $h={h} $boxed={boxed} $title={n === 2}>
            {boxed ? data[col] : null}
          </Cell>
        );
      })}
    </tr>
  );
}

function Sheet() {
  return (
    <Grid>
      <Table>
        <colgroup>
          <col width="22" />
          {columns.map(([name, w]) => <col key={name} width={w} />)}
        </colgroup>
        <thead>
          <tr>
            <ColHead>
              <Corner width="9" height="9" viewBox="0 0 9 9"><path d="M9 0v9H0z" fill="#b3b7c0" /></Corner>
            </ColHead>
            {columns.map(([name], i) => <ColHead key={name} $on={i > 8 && i < 14}>{name}</ColHead>)}
          </tr>
        </thead>
        <tbody>
          {Array.from({ length: 26 }, (_, i) => <Row key={i} n={i + 1} />)}
        </tbody>
      </Table>
      <Selection />
    </Grid>
  );
}

const VScroll = styled.div`
  display: flex;
  flex-direction: column;
  justify-content: space-between;
  align-items: center;
  flex: none;
  width: 13px;
  margin: 0 2px 0 3px;
  padding-bottom: 8px;
  background: #e6e8ee;
  &::before {
    content: "";
    width: 11px;
    height: 35%;
    border-radius: 6px;
    background: #d1d4dc;
  }
`;

const SheetBar = styled.div`
  display: flex;
  align-items: center;
  flex: none;
  height: 22px;
  padding-right: 24px;
  border-top: 1px solid #dfe2e8;
`;

const SheetNav = styled.svg`
  flex: none;
  width: 116px;
  height: 20px;
  fill: none;
  stroke: #989ca8;
`;

const SheetTab = styled.button`
  height: 21px;
  margin-right: 1px;
  padding: 0 16px;
  background: ${props => props.$bg || "#e5e6ec"};
  color: ${props => (props.$active ? "#25b87b" : "#4a4f5c")};
  font-weight: ${props => (props.$active ? 700 : 400)};
`;

const HScroll = styled.div`
  display: flex;
  align-items: center;
  justify-content: space-between;
  width: 562px;
  height: 14px;
  margin: 0 5px;
  padding: 0 5px;
  background: #e6e8ee;
`;

const Thumb = styled.span`
  width: 320px;
  height: 12px;
  margin-right: 88px;
  border-radius: 6px;
  background: #d1d4da;
`;

const Handle = styled.span`
  width: 4px;
  height: 10px;
  border: solid #7d8390;
  border-width: 0 1px;
`;

const ScrollArrow = styled(Caret)`
  transform: rotate(${props => props.$turn}deg);
`;

function SheetTabs() {
  return (
    <SheetBar>
      <SheetNav viewBox="0 0 116 20" aria-hidden="true">
        <path d="M11.500 4v12M19 4l-6 6 6 6M44 4l-6 6 6 6M64 4l6 6-6 6M88 4l6 6-6 6M96.500 4v12" />
      </SheetNav>
      <SheetTab $bg="#fff" $active>成绩表</SheetTab>
      <SheetTab>员工信息</SheetTab>
      <SheetTab>田字格</SheetTab>
      <SheetTab $bg="#b9d3ec">XXX公司销售额</SheetTab>
      <SheetTab $bg="#f4ae80">课程表</SheetTab>
      <SheetTab>Sheet5</SheetTab>
      <IconButton aria-label="新建工作表"><Icon name="thinPlus" /></IconButton>
      <Spacer />
      <Handle />
      <HScroll><ScrollArrow $turn={90} /><Thumb /><ScrollArrow $turn={-90} /></HScroll>
      <Handle />
    </SheetBar>
  );
}

/* ---------- pivot panel ---------- */

const Panel = styled.aside`
  flex: none;
  width: 261px;
  padding: 0 2px 0 8px;
  border: solid #dde0e6;
  border-width: 0 1px;
`;

const PanelHead = styled.div`
  display: flex;
  justify-content: flex-end;
  height: 64px;
  padding-top: 3px;
`;

const PanelHint = styled.p`
  margin: 0 0 2px 13px;
`;

const FieldList = styled.div`
  height: 281px;
  margin: 0 9px 0 12px;
  padding: 1px 5px;
  border: 1px solid #d4d7dd;
  border-radius: 2px;
  background: #fff;
`;

const Field = styled.label`
  display: flex;
  align-items: center;
  gap: 4px;
  height: 21px;
  font-weight: ${props => (props.$bold ? 700 : 400)};
`;

const Check = styled.input`
  appearance: none;
  display: flex;
  justify-content: center;
  width: 14px;
  height: 14px;
  margin: 0;
  border: 1px solid #a3a7b1;
  border-radius: 2px;
  background: #fff;
  &:checked::after {
    content: "";
    width: 4px;
    height: 8px;
    margin-top: 1px;
    border: solid #2b303b;
    border-width: 0 2px 2px 0;
    transform: rotate(42deg);
  }
`;

const AreaTitle = styled.h2`
  display: flex;
  align-items: center;
  gap: 5px;
  margin: 18px 0 5px 2px;
  font-size: 14px;
  line-height: 20px;
  font-weight: 600;
  color: #3b4254;
`;

const AreaText = styled.p`
  margin: 0;
`;

const Areas = styled.div`
  display: grid;
  grid-template-columns: 1fr 1fr;
  column-gap: 8px;
  padding: 6px 12px 0 5px;
`;

const AreaLabel = styled.h3`
  display: flex;
  align-items: center;
  gap: 7px;
  height: 25px;
  margin: 0;
  padding-left: 4px;
  font-size: 12px;
  font-weight: 400;
`;

const AreaBox = styled.div`
  height: 182px;
  margin-bottom: 9px;
  padding: 2px 1px 0 2px;
  border: 1px solid #d4d7dd;
  border-radius: 2px;
  background: #fff;
`;

const AreaItem = styled.button`
  display: flex;
  align-items: center;
  justify-content: space-between;
  width: 100%;
  height: 22px;
  margin-bottom: 1px;
  padding: 0 7px 0 1px;
  border: 1px solid #e0e3e8;
`;

const ItemCaret = styled(Caret)`
  border-width: 5px 5px 0;
  border-top-color: #6b6b6b;
`;

const areaIcons = {
  筛选器: <path d="M1 3h11v2L8 8v6H6V8L1 5z" fill="#c9ccd2" />,
  列: <path d="M1 2h3v11H1zM6 2h1v11H6zM8 2h1v11H8zM10 2h1v11h-1z" fill="#c9ccd2" />,
  行: <path d="M1 2h12v4H1zM1 8h12v1H1zM1 11h12v1H1z" fill="#c9ccd2" />,
  值: <path d="M11 3H3l4 4-4 5h8" fill="none" stroke="#c9ccd2" />
};

function Area({ title, items }) {
  return (
    <section>
      <AreaLabel>
        <svg width="14" height="14" viewBox="0 0 14 14" aria-hidden="true">{areaIcons[title]}</svg>
        {title}
      </AreaLabel>
      <AreaBox>
        {items.map(item => <AreaItem key={item}>{item}<ItemCaret /></AreaItem>)}
      </AreaBox>
    </section>
  );
}

const fields = [
  ["姓名", false], ["班级", true], ["语文", true], ["数学", true], ["英语", true],
  ["物理", false], ["化学", false], ["生物", false], ["总分", true], ["排名", false]
];

function PivotPanel() {
  return (
    <Panel>
      <PanelHead>
        <IconButton aria-label="固定"><Icon name="pin" /></IconButton>
        <IconButton aria-label="关闭"><Icon name="close" /></IconButton>
      </PanelHead>
      <PanelHint>将字段拖动至数据透视表区域</PanelHint>
      <FieldList>
        {fields.map(([name, on]) => (
          <Field key={name} $bold={on}><Check type="checkbox" defaultChecked={on} />{name}</Field>
        ))}
      </FieldList>
      <AreaTitle>
        <svg width="8" height="8" viewBox="0 0 8 8" aria-hidden="true"><path d="M8 0v8H0z" fill="#7dbb5c" /></svg>
        数据透视表区域
      </AreaTitle>
      <AreaText>在下面区域中拖动字段</AreaText>
      <Areas>
        <Area title="筛选器" items={[]} />
        <Area title="列" items={["∑值"]} />
        <Area title="行" items={["班级"]} />
        <Area title="值" items={["平均值项:语文", "平均值项:数学", "平均值项:英语", "平均值项:总分"]} />
      </Areas>
    </Panel>
  );
}

const Rail = styled.nav`
  display: flex;
  flex-direction: column;
  align-items: center;
  flex: none;
  gap: 4px;
  width: 41px;
  padding-top: 10px;
`;

const Grip = styled.span`
  width: 20px;
  height: 4px;
  margin-bottom: 10px;
  border: solid #c3c7cf;
  border-width: 1px 0;
`;

const RailButton = styled(IconButton)`
  width: 32px;
  height: 32px;
`;

const RailEnd = styled.div`
  display: flex;
  justify-content: center;
  width: 36px;
  height: 43px;
  margin-top: auto;
  padding-top: 20px;
  border-top: 1px solid #dde0e6;
`;

const railIcons = ["rocket", "pointer", "sliders", "pivot", "resource", "idea", "book"];
const railColors = { rocket: "#5a6072", sliders: "#8a8f9e" };

/* ---------- status bar ---------- */

const StatusBar = styled.footer`
  display: flex;
  align-items: center;
  flex: none;
  height: 28px;
  padding: 0 8px 0 7px;
  border-top: 1px solid #e0e3e8;
`;

const StatusText = styled.span`
  margin-right: 8px;
  white-space: nowrap;
`;

const StatusGap = styled(Divider)`
  margin: 0 ${props => props.$m || 10}px;
`;

const StatusButton = styled.button`
  display: flex;
  align-items: center;
  gap: 9px;
  margin-right: 15px;
`;

const StatusLabel = styled.span`
  display: flex;
  align-items: center;
`;

const ZoomLabel = styled(Label)`
  margin-right: 6px;
`;

const Zoom = styled.input`
  appearance: none;
  width: 142px;
  height: 14px;
  margin: 0 0 0 4px;
  background: linear-gradient(to right, #2b303b 54px, #b3b7c0 54px) center / 100% 1px no-repeat;
  &::-webkit-slider-thumb {
    appearance: none;
    width: 12px;
    height: 12px;
    border: 1px solid #4a4f5c;
    border-radius: 50%;
    background: #f5f6f9;
  }
`;

const ZoomMark = styled.span`
  width: 10px;
  height: 2px;
  background: #2b303b;
`;

const Desktop = styled.div`
  flex: none;
  height: 4px;
  background: linear-gradient(to right, #20373f 582px, #48565d 582px 650px, #1b2b3c 650px);
`;

function Status() {
  return (
    <StatusBar>
      <IconButton aria-label="宏"><Icon name="script" /></IconButton>
      <StatusGap $m={7} />
      <StatusButton>
        <StatusLabel><Icon name="salary" />工资结算</StatusLabel>
        <Caret $up />
      </StatusButton>
      <StatusText>平均值=186.2875</StatusText>
      <StatusText>计数=20</StatusText>
      <StatusText>求和=2235.45</StatusText>
      <Spacer />
      <IconButton aria-label="护眼模式"><Icon name="eye" /></IconButton>
      <IconButton $w={30} aria-label="阅读模式"><Icon name="cross" /><Caret /></IconButton>
      <StatusGap $m={11} />
      <IconButton $w={24} $active aria-label="普通视图"><Icon name="gridView" /></IconButton>
      <IconButton $w={26} aria-label="页面布局"><Icon name="pageView" /></IconButton>
      <IconButton $w={26} aria-label="分页预览"><Icon name="breakView" /></IconButton>
      <StatusGap $m={10} />
      <ZoomLabel>80%<Caret /></ZoomLabel>
      <IconButton $w={24} aria-label="缩小"><ZoomMark /></IconButton>
      <Zoom type="range" min="10" max="210" defaultValue="80" aria-label="缩放" />
      <IconButton $w={28} aria-label="放大"><Icon name="plus" /></IconButton>
      <IconButton $w={24} aria-label="全屏"><Icon name="expand" /></IconButton>
    </StatusBar>
  );
}

/* ---------- overlays ---------- */

const ArrowSvg = styled.svg`
  position: absolute;
  top: ${props => props.$y}px;
  left: ${props => props.$x}px;
  z-index: 10;
  overflow: visible;
  pointer-events: none;
  filter: drop-shadow(1px 3px 2px rgba(0, 0, 0, 0.45));
`;

function Arrow({ from, to }) {
  const dx = from[0] - to[0];
  const dy = from[1] - to[1];
  const angle = (Math.atan2(dy, dx) * 180) / Math.PI;
  const length = Math.hypot(dx, dy);
  return (
    <ArrowSvg $x={to[0]} $y={to[1]} width="1" height="1" aria-hidden="true">
      <g transform={`rotate(${angle})`}>
        <path d={`M20-1L${length}-1v2L20 1z`} fill="#d40f14" stroke="#d40f14" strokeWidth="1" />
        <path d="M0 0L26-7 22 0 26 7z" fill="#fe0b0b" />
      </g>
    </ArrowSvg>
  );
}

const Cursor = styled.svg`
  position: absolute;
  top: 260px;
  left: 1643px;
  z-index: 10;
`;

const Watermark = styled.div`
  position: absolute;
  right: 10px;
  bottom: 7px;
  z-index: 10;
  display: flex;
  align-items: center;
  gap: 2px;
  opacity: 0.8;
  pointer-events: none;
`;

const WatermarkText = styled.div`
  color: #6aa5dc;
  font-size: 21px;
  font-weight: 700;
  line-height: 26px;
`;

const WatermarkUrl = styled.div`
  color: #5bc274;
  font-family: "Liberation Sans", sans-serif;
  font-size: 17px;
  line-height: 18px;
  -webkit-text-stroke: 1px #5bc274;
`;

const Page = styled.div`
  position: relative;
  display: flex;
  flex-direction: column;
  height: 100vh;
`;

export default function App() {
  return (
    <Page>
      <GlobalStyle />
      <FileTabs />
      <Menu />
      <Ribbon />
      <Main>
        <Work>
          <FormulaBar>
            <NameBox>
              <FormulaInput defaultValue="L2" aria-label="名称框" />
              <Caret />
            </NameBox>
            <Icon name="cancel" color="#4a4f5c" />
            <Fx>fx</Fx>
            <FormulaInput defaultValue="行标签" aria-label="编辑栏" />
          </FormulaBar>
          <SheetArea>
            <Sheet />
            <VScroll><Caret /></VScroll>
          </SheetArea>
          <SheetTabs />
        </Work>
        <PivotPanel />
        <Rail>
          <Grip />
          {railIcons.map(name => (
            <RailButton key={name} $active={name === "pivot"} aria-label={name}>
              <Icon name={name} color={railColors[name]} />
            </RailButton>
          ))}
          <RailEnd>
            <svg width="16" height="6" viewBox="0 0 16 6" fill="none" stroke="#2b303b" aria-hidden="true">
              <circle cx="3" cy="3" r="1.500" /><circle cx="8" cy="3" r="1.500" /><circle cx="13" cy="3" r="1.500" />
            </svg>
          </RailEnd>
        </Rail>
      </Main>
      <Status />
      <Desktop />

      <Arrow from={[393, 157]} to={[293, 71]} />
      <Arrow from={[1200, 178]} to={[1303, 118]} />
      <Arrow from={[1257, 290]} to={[1314, 259]} />
      <Arrow from={[1478, 302]} to={[1538, 257]} />
      <Cursor width="14" height="20" viewBox="0 0 14 20" aria-hidden="true">
        <path d="M.5.500v16l4-3.500 2.500 6 3-1.500-2.500-5.500h5z" fill="#fff" stroke="#2b303b" />
      </Cursor>
      <Watermark>
        <svg width="42" height="40" viewBox="0 0 42 40" aria-hidden="true">
          <path d="M41 2C22 0 6 8 2 24c-1 6 1 8 4 9C6 20 14 9 41 2z" fill="#58aee6" />
          <path d="M3 27c6 4 12-2 16-8 4-5 8-7 14-6-7 3-8 8-12 13-5 6-12 8-16 5z" fill="#5f86cf" />
          <path d="M34 14c6 2 5 9 0 14-6 6-14 8-21 10 10-6 18-14 21-24z" fill="#6cc36a" />
          <path d="M9 38c8 1 16-3 21-9-7 4-12 5-18 5z" fill="#d5dc4a" />
        </svg>
        <div>
          <WatermarkText>极光下载站</WatermarkText>
          <WatermarkUrl>www.xz7.com</WatermarkUrl>
        </div>
      </Watermark>
    </Page>
  );
}
